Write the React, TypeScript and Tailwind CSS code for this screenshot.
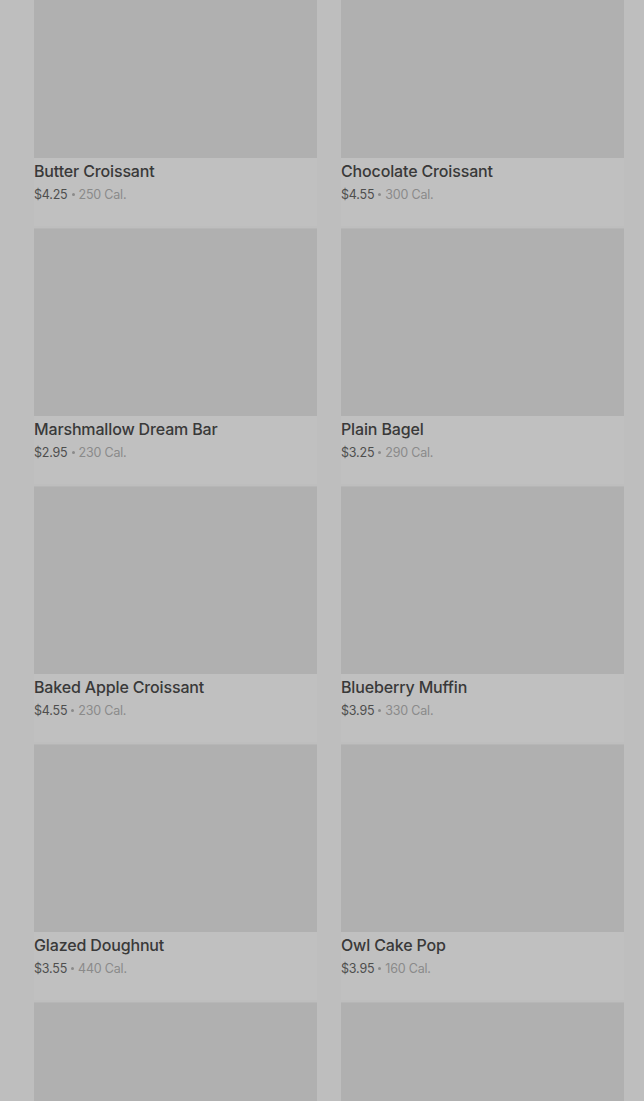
import React from "react";

const data = [
  { name: "Butter Croissant", price: "$4.25", cal: "250 Cal." },
  { name: "Chocolate Croissant", price: "$4.55", cal: "300 Cal." },
  { name: "Marshmallow Dream Bar", price: "$2.95", cal: "230 Cal." },
  { name: "Plain Bagel", price: "$3.25", cal: "290 Cal." },
  { name: "Baked Apple Croissant", price: "$4.55", cal: "230 Cal." },
  { name: "Blueberry Muffin", price: "$3.95", cal: "330 Cal." },
  { name: "Glazed Doughnut", price: "$3.55", cal: "440 Cal." },
  { name: "Owl Cake Pop", price: "$3.95", cal: "160 Cal." },
];

function Card({ name, price, cal }: { name: string; price: string; cal: string }) {
  return (
    <div className="flex h-[256px] flex-col bg-[#c0c0c0]">
      <div className="h-[188px] shrink-0 bg-[#b0b0b0] border-t border-[#b6b6b6]" />
      <div className="pt-[1px]">
        <div className="h-[24px] text-[16px] leading-[24px] font-medium text-[#393939] tracking-[-0.15px]">{name}</div>
        <div className="flex h-[23px] items-center text-[12.5px] leading-[23px] text-[#4e4e4e] tracking-[-0.2px]">
          <span>{price}</span>
          <span className="mx-[4px] inline-block h-[3px] w-[3px] rounded-full bg-[#8a8a8a]" />
          <span className="text-[#8a8a8a]">{cal}</span>
        </div>
      </div>
    </div>
  );
}

export default function App() {
  return (
    <div
      className="w-[644px] h-[1101px] overflow-hidden bg-[#bebebe] pl-[34px] pr-[20px]"
      style={{ fontFamily: "Inter, 'Noto Sans', sans-serif" }}
    >
      <div className="-mt-[30px] grid grid-cols-2 gap-x-[24px] gap-y-[2px]">
        {data.map((d) => (
          <Card key={d.name} {...d} />
        ))}
        <div className="h-[189px] bg-[#b0b0b0] border-t border-[#b6b6b6]" />
        <div className="h-[189px] bg-[#b0b0b0] border-t border-[#b6b6b6]" />
      </div>
    </div>
  );
}
